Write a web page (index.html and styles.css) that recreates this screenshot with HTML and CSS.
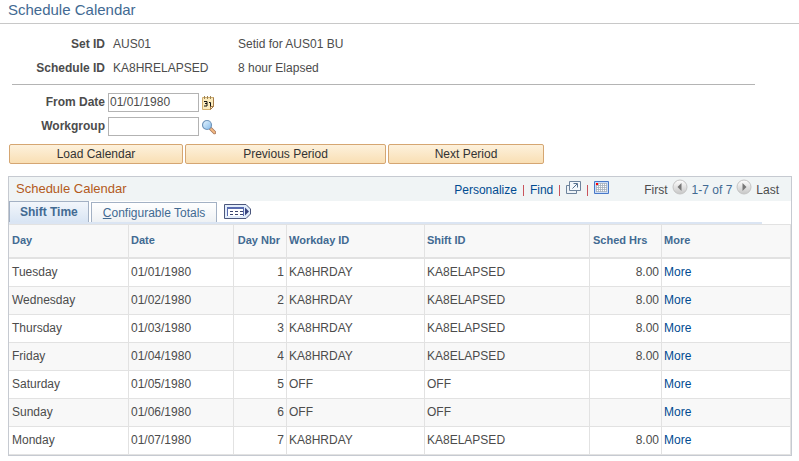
FILE: index.html
```
<!DOCTYPE html>
<html lang="en">
<head>
<meta charset="utf-8">
<title>Schedule Calendar</title>
<link rel="stylesheet" href="styles.css">
</head>
<body>
<header class="page-head"><h1>Schedule Calendar</h1></header>
<main>
  <dl class="keys">
    <dt>Set ID</dt><dd>AUS01</dd><dd>Setid for AUS01 BU</dd>
    <dt>Schedule ID</dt><dd>KA8HRELAPSED</dd><dd>8 hour Elapsed</dd>
  </dl>
  <hr class="rule">
  <form class="search">
    <div class="fields">
      <label for="from">From Date</label>
      <input id="from" type="text" value="01/01/1980">
      <button type="button" class="icon" aria-label="Choose a date">
        <svg width="14" height="16" viewBox="0 0 14 16">
          <path d="M0.500 2.500h11v9l-3 3h-8z" fill="#fbebbd" stroke="#d3b070"/>
          <path d="M11.500 2.500v9l-3 3v-3h3" fill="#fff6d6" stroke="#a67c4a"/>
          <path d="M2.500 1v3M5.500 1v3M8.500 1v3" stroke="#9a8358"/>
          <path d="M2 6.500h3v4.500H2M3 8.500h2M7 7.500h1.500V11.500" fill="none" stroke="#111"/>
        </svg>
      </button>
      <label for="group">Workgroup</label>
      <input id="group" type="text">
      <button type="button" class="icon" aria-label="Look up workgroup">
        <svg width="14" height="16" viewBox="0 0 14 16">
          <defs><linearGradient id="lens" x2="1" y2="1"><stop stop-color="#e8f6ff"/><stop offset="1" stop-color="#82b9ea"/></linearGradient></defs>
          <path d="M8.500 9.500l4 4" stroke="#a4745a" stroke-width="3.400" stroke-linecap="round"/>
          <path d="M9 10l3.500 3.500" stroke="#f3ba83" stroke-width="1.800" stroke-linecap="round"/>
          <circle cx="5" cy="6" r="4.500" fill="url(#lens)" stroke="#7196bb" stroke-width="1.200"/>
        </svg>
      </button>
    </div>
    <div class="actions">
      <button type="button" class="load">Load Calendar</button>
      <button type="button" class="prev">Previous Period</button>
      <button type="button" class="next">Next Period</button>
    </div>
  </form>
  <section class="grid">
    <div class="bar">
      <h2>Schedule Calendar</h2>
      <div class="tools">
        <a href="#">Personalize</a><i></i><a href="#">Find</a><i></i>
        <a href="#" class="pic" aria-label="View all">
          <svg width="15" height="13" viewBox="0 0 15 13">
            <path d="M3 4.500H.500v8h10V10" fill="#eef3f7" stroke="#6d839c"/>
            <path d="M3.500.500h11v9h-11z" fill="#f4f8fb" stroke="#6d839c"/>
            <path d="M6.500 7.500l4.500-4.500M7.500 2.500h4v4" fill="none" stroke="#55708e"/>
          </svg></a><i></i>
        <a href="#" class="pic" aria-label="Download">
          <svg width="15" height="13" viewBox="0 0 15 13">
            <path d="M.500.500h14v12H.500z" fill="#c9dcf8" stroke="#4878c8"/>
            <path d="M2 2h11v9H2z" fill="#fff"/>
            <path d="M2.500 2v9M4.500 2v9M6.500 2v9M8.500 2v9M10.500 2v9M12.500 2v9M2 2.500h11M2 4.500h11M2 6.500h11M2 8.500h11M2 10.500h11" stroke="#a3aebd" stroke-width=".8"/>
            <path d="M2 2h2v2H2z" fill="#f00"/>
          </svg></a>
      </div>
      <div class="pager">
        <span>First</span>
        <button type="button" class="icon" aria-label="Previous rows">
          <svg width="16" height="16" viewBox="0 0 16 16">
            <defs><linearGradient id="knob" x2="0" y2="1"><stop stop-color="#fff"/><stop offset="1" stop-color="#c6c6c6"/></linearGradient></defs>
            <circle cx="8" cy="8" r="7" fill="url(#knob)" stroke="#c4c4c4"/><path d="M9.500 4v8L5.500 8z" fill="#777"/>
          </svg></button>
        <span class="count">1-7 of 7</span>
        <button type="button" class="icon" aria-label="Next rows">
          <svg width="16" height="16" viewBox="0 0 16 16">
            <circle cx="8" cy="8" r="7" fill="url(#knob)" stroke="#c4c4c4"/><path d="M6.500 4v8L10.500 8z" fill="#777"/>
          </svg></button>
        <span>Last</span>
      </div>
    </div>
    <nav class="tabs">
      <a href="#" class="tab on">Shift Time</a>
      <a href="#" class="tab"><u>C</u>onfigurable Totals</a>
      <button type="button" class="icon all" aria-label="Show all columns">
        <svg width="27" height="15" viewBox="0 0 27 15">
          <path d="M.500.500h21.500l4.500 4.500v5l-4.500 4.500H.500z" fill="#e2edfb" stroke="#4b567c"/>
          <path d="M3.500 12V3.500h16V12" fill="#fff" stroke="#5a6cb0"/>
          <path d="M3 4h17" stroke="#5a6cb0" stroke-width="2"/>
          <path d="M6 7.500h13M6 10.500h13" stroke="#39456f" stroke-dasharray="3 2"/>
          <path d="M21 3.500v8l4-4z" fill="#39457f"/>
        </svg></button>
    </nav>
    <table>
      <colgroup><col class="c1"><col class="c2"><col class="c3"><col class="c4"><col class="c5"><col class="c6"><col></colgroup>
      <thead><tr><th>Day</th><th>Date</th><th class="n">Day Nbr</th><th>Workday ID</th><th>Shift ID</th><th class="hrs">Sched Hrs</th><th>More</th></tr></thead>
      <tbody>
        <tr><td>Tuesday</td><td>01/01/1980</td><td class="n">1</td><td>KA8HRDAY</td><td>KA8ELAPSED</td><td class="n">8.00</td><td><a href="#">More</a></td></tr>
        <tr><td>Wednesday</td><td>01/02/1980</td><td class="n">2</td><td>KA8HRDAY</td><td>KA8ELAPSED</td><td class="n">8.00</td><td><a href="#">More</a></td></tr>
        <tr><td>Thursday</td><td>01/03/1980</td><td class="n">3</td><td>KA8HRDAY</td><td>KA8ELAPSED</td><td class="n">8.00</td><td><a href="#">More</a></td></tr>
        <tr><td>Friday</td><td>01/04/1980</td><td class="n">4</td><td>KA8HRDAY</td><td>KA8ELAPSED</td><td class="n">8.00</td><td><a href="#">More</a></td></tr>
        <tr><td>Saturday</td><td>01/05/1980</td><td class="n">5</td><td>OFF</td><td>OFF</td><td></td><td><a href="#">More</a></td></tr>
        <tr><td>Sunday</td><td>01/06/1980</td><td class="n">6</td><td>OFF</td><td>OFF</td><td></td><td><a href="#">More</a></td></tr>
        <tr><td>Monday</td><td>01/07/1980</td><td class="n">7</td><td>KA8HRDAY</td><td>KA8ELAPSED</td><td class="n">8.00</td><td><a href="#">More</a></td></tr>
      </tbody>
    </table>
  </section>
</main>
</body>
</html>
```
FILE: styles.css
```
* { box-sizing: border-box; }
body {
  margin: 0;
  background: #fff;
  color: #4c4c4c;
  font: 12px/16px "Liberation Sans", Arial, sans-serif;
}
a { color: #004b91; text-decoration: none; }
svg { display: block; }
button, input { font: inherit; color: inherit; }
.icon { padding: 0; border: 0; background: none; cursor: pointer; }

.page-head { padding: 0 8px 3px; border-bottom: 1px solid #c8c8c8; }
h1 { margin: 0; font-size: 15px; line-height: 20px; font-weight: normal; color: #426a92; }

.keys {
  display: grid;
  grid-template-columns: 97px 117px 1fr;
  column-gap: 8px;
  row-gap: 8px;
  margin: 12px 8px 8px;
}
.keys dt { text-align: right; font-weight: bold; }
.keys dd { margin: 0; }
.rule { margin: 0 44px 0 12px; border: 0; border-top: 1px solid #b4b4b4; }

.fields {
  display: grid;
  grid-template-columns: 97px 91px 14px;
  column-gap: 3px;
  row-gap: 5px;
  align-items: center;
  margin: 8px 8px 0;
}
.fields label { padding-bottom: 2px; text-align: right; font-weight: bold; }
.fields input {
  width: 100%;
  height: 19px;
  padding: 0 1px 2px;
  border: 1px solid #b3b3b3;
  background: #fff;
}
.actions { display: flex; gap: 2px; margin: 8px 9px 12px; }
.actions button {
  height: 20px;
  padding: 0;
  border: 1px solid #d5a672;
  border-radius: 2px;
  background: linear-gradient(#fdf1dc, #f9dfb4);
  color: #333;
}
.load { width: 174px; }
.prev { width: 201px; }
.next { width: 156px; }

.grid { margin: 0 7px 0 8px; border: 1px solid #c6cad1; }
.bar { display: flex; align-items: center; height: 24px; padding-left: 7px; background: #f0f4f5; }
h2 { flex: 1; margin: 0; font-size: 13px; font-weight: normal; color: #b35a1b; }
.tools { display: flex; align-items: center; gap: 6px; padding-top: 2px; }
.tools i { width: 1px; height: 11px; background: #c9545c; }
.pic { padding-bottom: 6px; }
.pager { display: flex; align-items: center; gap: 4px; margin: 0 12px 0 35px; padding-top: 2px; }
.pager .icon { padding-bottom: 6px; }
.count { color: #426a92; }

.tabs {
  display: flex;
  align-items: flex-end;
  gap: 2px;
  margin-right: 29px;
  border-bottom: 2px solid #dbe5f3;
}
.tab {
  height: 20px;
  padding: 2px 11px 0;
  border: 1px solid #a3b1c4;
  border-bottom: 0;
  background: linear-gradient(#fff, #eef1f4);
  color: #426a92;
}
.tab.on { height: 21px; padding: 2px 10px 0; font-weight: bold; background: linear-gradient(#f2f6fb, #d9e5f4); }
.all { margin: 0 0 3px 5px; }

table { width: 100%; table-layout: fixed; border-spacing: 0; border-top: 1px solid #e2e2e2; }
.c1 { width: 120px; }
.c2 { width: 105px; }
.c3 { width: 53px; }
.c4 { width: 138px; }
.c5 { width: 165px; }
.c6 { width: 72px; }
th, td {
  height: 28px;
  padding: 0 2px 2px;
  border-right: 1px solid #e2e2e2;
  border-bottom: 1px solid #e2e2e2;
  text-align: left;
  white-space: nowrap;
}
th { height: 34px; border-bottom-width: 2px; background: #f8f8f8; color: #426a92; font-size: 11px; }
th:first-child, td:first-child, th.hrs { padding-left: 3px; }
tbody tr:nth-child(even) { background: #f8f8f8; }
.n { text-align: right; }
th.n { padding-right: 6px; }
```
